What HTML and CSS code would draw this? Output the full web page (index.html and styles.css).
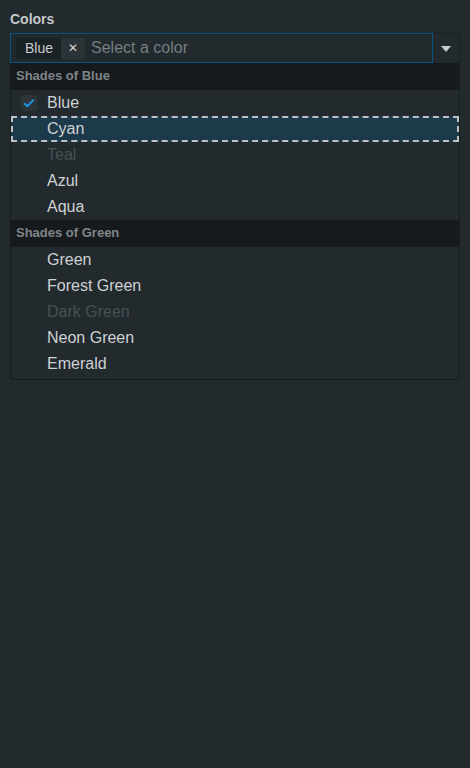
FILE: index.html
```html
<!DOCTYPE html>
<html>
<head>
<meta charset="utf-8">
<link rel="stylesheet" href="styles.css">
</head>
<body>
<div class="wrap">
  <div class="label">Colors</div>
  <div class="combo">
    <div class="field">
      <span class="chip"><span class="chip-text">Blue</span><span class="chip-x">✕</span></span>
      <span class="placeholder">Select a color</span>
    </div>
    <div class="toggle">
      <svg width="10" height="6" viewBox="0 0 10 6"><path d="M0 0H10L5 6Z" fill="#c9cccf"/></svg>
    </div>
  </div>
  <div class="menu">
    <div class="group">Shades of Blue</div>
    <div class="item"><span class="check"><svg width="12" height="10" viewBox="0 0 12 10"><path d="M1.2 5.2L4.4 8.2L10.8 1.6" fill="none" stroke="#1b95e0" stroke-width="2"/></svg></span>Blue</div>
    <div class="item focus">Cyan</div>
    <div class="item disabled">Teal</div>
    <div class="item">Azul</div>
    <div class="item">Aqua</div>
    <div class="group">Shades of Green</div>
    <div class="item">Green</div>
    <div class="item">Forest Green</div>
    <div class="item disabled">Dark Green</div>
    <div class="item">Neon Green</div>
    <div class="item">Emerald</div>
  </div>
</div>
</body>
</html>
```
FILE: styles.css
```css
html, body {
  margin: 0;
  padding: 0;
  background: #222a2e;
  height: 100%;
}
body {
  font-family: "Liberation Sans", Arial, sans-serif;
}
.wrap {
  padding: 11px 10px 0 10px;
}
.label {
  font-size: 14px;
  font-weight: bold;
  color: #c5c8ca;
  line-height: 16px;
  margin-bottom: 6px;
}
.combo {
  display: flex;
  height: 30px;
}
.field {
  flex: 1;
  display: flex;
  align-items: center;
  border: 1px solid #0a5580;
  box-sizing: border-box;
  padding-left: 5px;
}
.chip {
  display: flex;
  height: 21px;
  margin-top: 1px;
  border-radius: 2px;
  overflow: hidden;
}
.chip-text {
  background: #1b2226;
  color: #c8cbcd;
  font-size: 14px;
  line-height: 21px;
  padding: 0 8px 0 9px;
}
.chip-x {
  background: #2c3337;
  color: #d2d4d6;
  font-size: 12px;
  line-height: 21px;
  width: 24px;
  text-align: center;
}
.placeholder {
  margin-left: 6px;
  font-size: 16px;
  color: #767d82;
}
.toggle {
  width: 27px;
  box-sizing: border-box;
  border: 1px solid #1a2023;
  border-left: none;
  border-bottom: none;
  border-radius: 0 3px 0 0;
  display: flex;
  align-items: center;
  justify-content: center;
}
.toggle svg {
  margin-left: -1px;
}
.menu {
  border: 1px solid #181d20;
  border-top: none;
  border-radius: 0 0 3px 3px;
  padding-bottom: 2px;
}
.group {
  height: 27px;
  line-height: 26px;
  background: #161a1d;
  color: #7f8589;
  font-size: 13px;
  font-weight: bold;
  padding-left: 5px;
}
.item {
  height: 26px;
  line-height: 26px;
  font-size: 16px;
  color: #cfd1d3;
  padding-left: 36px;
  position: relative;
  box-sizing: border-box;
}
.item.disabled {
  color: #485054;
}
.item.focus {
  background: #1d3a4b;
  outline: 2px dashed #bec2c5;
  outline-offset: -2px;
}
.check {
  position: absolute;
  left: 10px;
  top: 5px;
  width: 16px;
  height: 16px;
  background: #2c3438;
  border-radius: 2px;
  display: flex;
  align-items: center;
  justify-content: center;
}
```
